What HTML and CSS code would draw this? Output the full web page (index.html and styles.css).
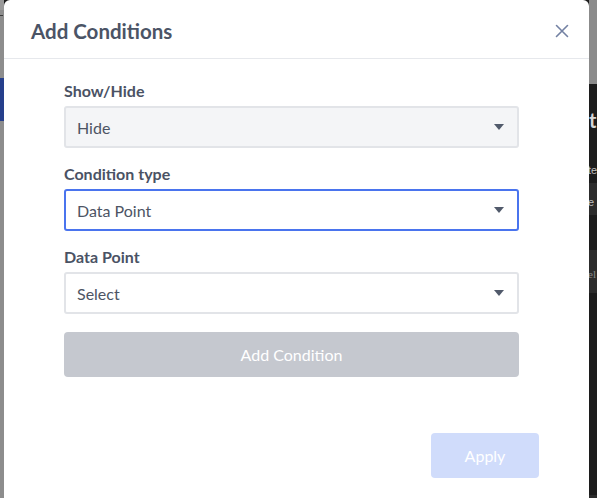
FILE: index.html
```html
<!DOCTYPE html>
<html lang="en">
<head>
<meta charset="utf-8">
<title>Add Conditions</title>
<link rel="stylesheet" href="styles.css">
</head>
<body>
<div class="stage">
  <div class="side side-left">
    <div class="band lb-top"><span class="mark"></span></div>
    <div class="band lb-blue"></div>
    <div class="band lb-rest"></div>
  </div>

  <div class="modal">
    <header class="modal-head">
      <h2 class="modal-title">Add Conditions</h2>
      <button class="close" aria-label="Close">
        <svg width="14" height="14" viewBox="0 0 14 14"><path d="M1.5 1.5 L12.5 12.5 M12.5 1.5 L1.5 12.5" stroke="#7381a3" stroke-width="1.6" fill="none" stroke-linecap="round"/></svg>
      </button>
    </header>
    <div class="modal-body">
      <div class="field">
        <label class="field-label">Show/Hide</label>
        <div class="select select-filled"><span>Hide</span><i class="caret"></i></div>
      </div>
      <div class="field">
        <label class="field-label">Condition type</label>
        <div class="select select-focus"><span>Data Point</span><i class="caret"></i></div>
      </div>
      <div class="field">
        <label class="field-label">Data Point</label>
        <div class="select"><span>Select</span><i class="caret"></i></div>
      </div>
      <button class="btn-add">Add Condition</button>
    </div>
    <footer class="modal-foot">
      <button class="btn-apply">Apply</button>
    </footer>
  </div>

  <div class="side side-right">
    <div class="band rb-top"></div>
    <div class="band rb-dark rb-1"><span class="big">t</span></div>
    <div class="band rb-dark rb-2"><span class="small">te</span></div>
    <div class="band rb-mid rb-3"><span class="small">e</span></div>
    <div class="band rb-dark rb-4"></div>
    <div class="band rb-mid rb-5"><span class="small serif">el</span></div>
    <div class="band rb-dark rb-6"></div>
    <div class="band rb-mid rb-7"></div>
  </div>
</div>
</body>
</html>
```

FILE: styles.css
```css
* { box-sizing: border-box; }
html, body { margin: 0; padding: 0; }
body {
  width: 597px;
  height: 498px;
  overflow: hidden;
  font-family: "Lato", "Liberation Sans", sans-serif;
  background: #1c1c1c;
}
.stage {
  display: grid;
  grid-template-columns: 4px 585px 8px;
  height: 498px;
  overflow: hidden;
}
.side { display: flex; flex-direction: column; overflow: hidden; }
.band { flex: none; overflow: hidden; white-space: nowrap; }

.side-left { background: #8d8d8d; }
.lb-top { height: 78px; background: linear-gradient(#9a9a9a 0, #9a9a9a 10px, #8d8d8d 10px); position: relative; }
.mark { position: absolute; left: 0; top: 15px; width: 3px; height: 1px; background: #3a3a3a; }
.lb-blue { height: 43px; background: #263f8c; }
.lb-rest { flex: 1; background: #8d8d8d; }

.side-right { background: #1c1c1c; color: #cfcfcf; }
.rb-top { height: 84px; background: #8b8b8b; }
.rb-dark { background: #1c1c1c; }
.rb-mid { background: #2c2c2c; }
.rb-1 { height: 60px; padding-top: 24px; }
.rb-1 .big { font: 700 20px/24px "Lato", sans-serif; color: #d6d6d6; }
.rb-2 { height: 39px; padding-top: 14px; }
.rb-3 { height: 32px; padding-top: 7px; }
.rb-4 { height: 35px; }
.rb-5 { height: 43px; padding-top: 12px; }
.rb-6 { height: 202px; }
.rb-7 { flex: 1; }
.small { font: 400 11px/16px "Liberation Sans", sans-serif; color: #bdbdbd; margin-left: -1px; }
.serif { font-family: "Liberation Serif", serif; color: #8c8c8c; }

.modal {
  background: #ffffff;
  border-radius: 6px 6px 0 0;
  display: flex;
  flex-direction: column;
  height: 498px;
}
.modal-head {
  height: 59px;
  border-bottom: 1px solid #e6e8ec;
  display: flex;
  align-items: center;
  justify-content: space-between;
  padding: 3px 20px 0 27px;
}
.modal-title {
  margin: 0;
  font-size: 20.5px;
  font-weight: 700;
  color: #4b5466;
}
.close {
  border: 0;
  background: none;
  padding: 0;
  width: 14px;
  height: 14px;
  display: flex;
}

.modal-body {
  padding: 22px 70px 0 60px;
  display: flex;
  flex-direction: column;
  gap: 16px;
}
.field { display: flex; flex-direction: column; gap: 6px; }
.field-label {
  font-size: 16px;
  line-height: 19px;
  font-weight: 700;
  color: #4a5264;
}
.select {
  height: 42px;
  border: 2px solid #e2e4e8;
  border-radius: 3px;
  background: #ffffff;
  display: flex;
  align-items: center;
  justify-content: space-between;
  padding: 0 13px 0 11px;
  font-size: 16px;
  color: #4d5464;
}
.select-filled { background: #f4f5f7; }
.select-focus { border-color: #4a74ee; }
.caret {
  width: 0; height: 0;
  border-left: 5px solid transparent;
  border-right: 5px solid transparent;
  border-top: 6px solid #515a6b;
}
.btn-add {
  margin-top: 2px;
  height: 45px;
  border: 0;
  border-radius: 4px;
  background: #c5c8cf;
  color: #ffffff;
  font-family: inherit;
  font-size: 16px;
  font-weight: 400;
}
.modal-foot {
  display: flex;
  justify-content: flex-end;
  padding: 56px 50px 0 0;
}
.btn-apply {
  width: 108px;
  height: 45px;
  border: 0;
  border-radius: 4px;
  background: #d0dcfb;
  color: #ffffff;
  font-family: inherit;
  font-size: 16px;
}
```
